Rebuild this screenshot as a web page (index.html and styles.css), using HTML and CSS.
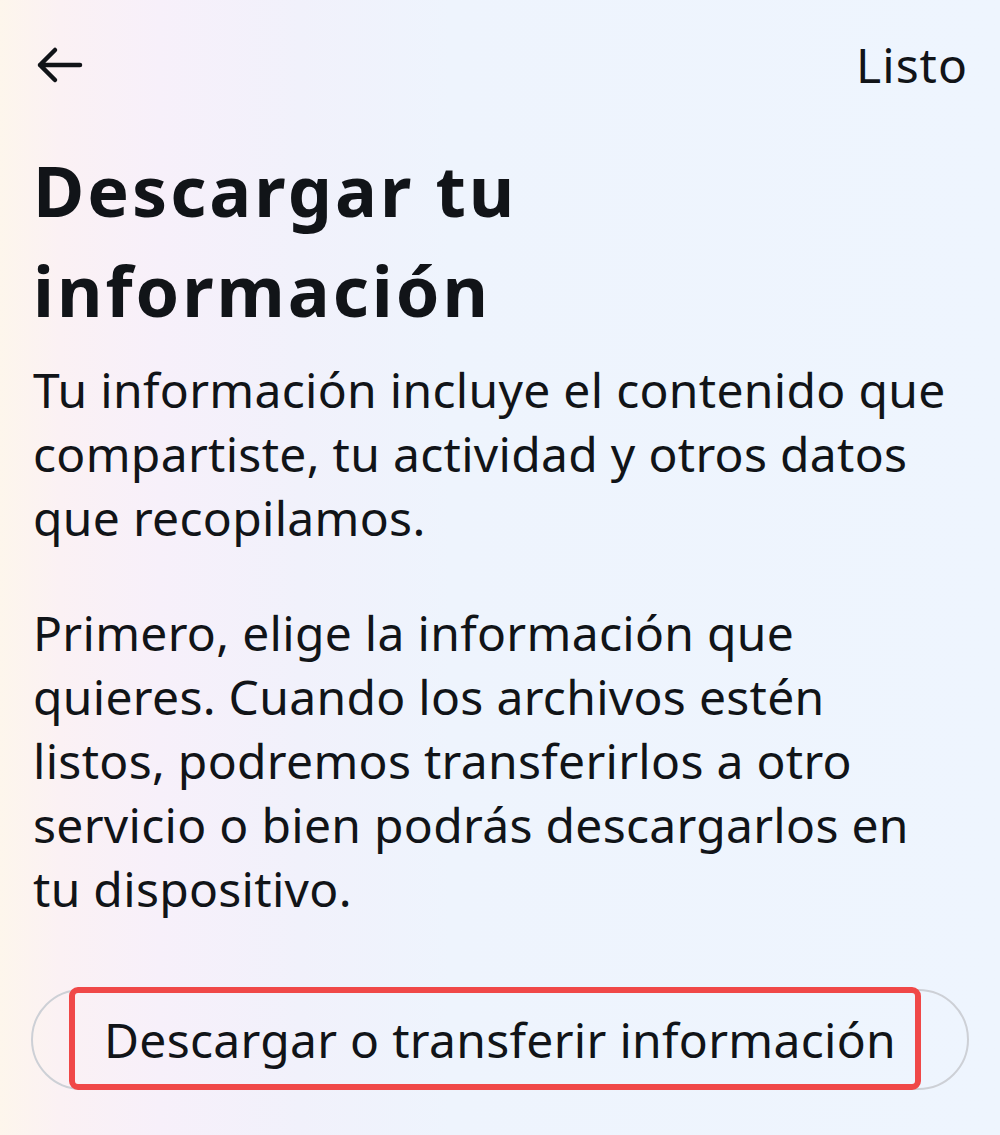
FILE: index.html
```html
<!DOCTYPE html>
<html lang="es">
<head>
<meta charset="utf-8">
<link rel="stylesheet" href="styles.css">
</head>
<body>
<div class="screen">
  <header class="topbar">
    <svg class="back" width="48" height="40" viewBox="0 0 48 40" aria-hidden="true">
      <path d="M20 5 L5 20 L20 35 M5 20 H45" fill="none" stroke="#111418" stroke-width="4.5" stroke-linecap="round" stroke-linejoin="round"/>
    </svg>
    <span class="done">Listo</span>
  </header>
  <h1 class="title">Descargar tu<br>información</h1>
  <p class="para first">Tu información incluye el contenido que<br>compartiste, tu actividad y otros datos<br>que recopilamos.</p>
  <p class="para second">Primero, elige la información que<br>quieres. Cuando los archivos estén<br>listos, podremos transferirlos a otro<br>servicio o bien podrás descargarlos en<br>tu dispositivo.</p>
  <div class="btn-wrap">
    <button class="pill">Descargar o transferir información</button>
    <span class="highlight"></span>
  </div>
</div>
</body>
</html>
```
FILE: styles.css
```css
* { box-sizing: border-box; }
html, body { margin: 0; padding: 0; }
body {
  width: 1000px;
  height: 1135px;
  overflow: hidden;
  font-family: "Noto Sans", "Open Sans", sans-serif;
  color: #111418;
  background: linear-gradient(90deg, #fdf6ec 0%, #fbf1f4 6%, #f7f0fa 16%, #f1f1fb 30%, #eef4fd 45%, #eef5fe 100%);
}
.screen {
  padding: 0 33px 0 33px;
  display: flex;
  flex-direction: column;
}
.topbar {
  height: 130px;
  display: flex;
  align-items: center;
  justify-content: space-between;
}
.back { display: block; margin-left: 2px; }
.done {
  font-size: 48px;
  line-height: 1;
  letter-spacing: 1px;
  margin-right: -1px;
}
.title {
  margin: 10px 0 0 0;
  font-size: 70px;
  line-height: 100px;
  font-weight: 700;
  letter-spacing: 3px;
}
.para {
  margin: 0;
  font-size: 48px;
  line-height: 64px;
  letter-spacing: 0.3px;
}
.para.first { margin-top: 18px; }
.para.second { margin-top: 51px; }
.btn-wrap {
  position: relative;
  margin-top: 68px;
  margin-left: -2px;
  margin-right: -2px;
}
.pill {
  display: block;
  width: 100%;
  height: 101px;
  border: 2px solid #cdd0d6;
  border-radius: 51px;
  background: transparent;
  font-family: inherit;
  font-size: 48px;
  color: #111418;
  letter-spacing: 0.3px;
  padding: 0;
}
.highlight {
  position: absolute;
  left: 38px;
  right: 48px;
  top: -2px;
  bottom: 0;
  border: 6px solid #f04848;
  border-radius: 9px;
  pointer-events: none;
}
```
